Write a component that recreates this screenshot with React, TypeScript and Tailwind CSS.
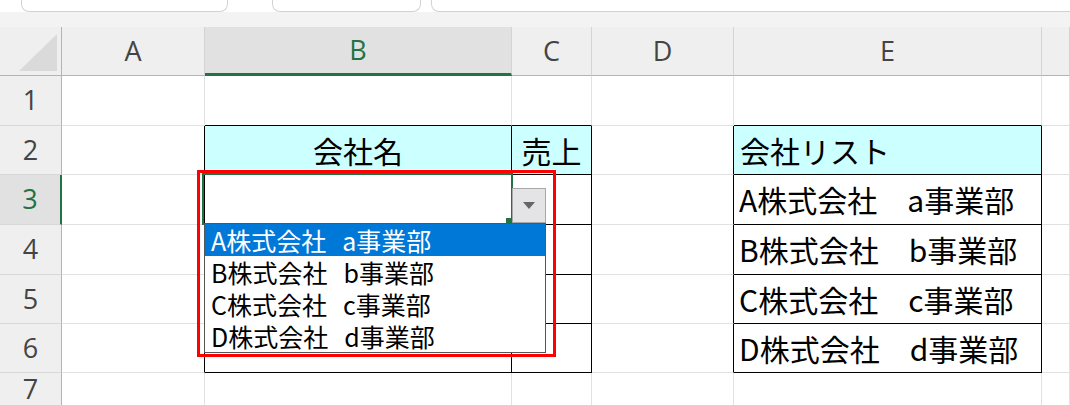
import React from 'react';

const companies = [
  ['A', 'a'],
  ['B', 'b'],
  ['C', 'c'],
  ['D', 'd'],
];

// gridline variants (right / bottom)
const G = 'border-r border-b border-[#e1e1e1]';
const RB = 'border-r border-b border-r-black border-b-[#e1e1e1]';
const BB = 'border-r border-b border-r-[#e1e1e1] border-b-black';
const K = 'border-r border-b border-black';

const colHead =
  "flex items-center justify-center bg-[#efefef] border-r border-b border-r-[#d4d4d4] border-b-[#b4b4b4] text-[#444] text-[27px] font-['Open_Sans',sans-serif]";
const colHeadSel =
  "flex items-center justify-center bg-[#e1e1e1] border-r border-b-[3px] border-r-[#d4d4d4] border-b-[#217346] text-[#217346] text-[27px] font-['Open_Sans',sans-serif]";
const rowHead =
  "flex items-center justify-center bg-[#efefef] border-r border-b border-r-[#b4b4b4] border-b-[#d8d8d8] text-[#444] text-[27px] font-['Open_Sans',sans-serif]";
const rowHeadSel =
  "flex items-center justify-center bg-[#e1e1e1] border-r-2 border-b border-r-[#217346] border-b-[#d8d8d8] text-[#217346] text-[27px] font-['Open_Sans',sans-serif]";

export default function App() {
  return (
    <div className="relative w-[1070px] h-[405px] overflow-hidden bg-white text-black font-['Noto_Sans_CJK_JP',sans-serif]">
      {/* name box / formula bar edges */}
      <div className="flex h-[12px] bg-white">
        <div className="ml-[21px] w-[207px] rounded-b-[8px] border border-t-0 border-[#d2d2d2]" />
        <div className="ml-[44px] w-[149px] rounded-b-[8px] border border-t-0 border-[#d2d2d2]" />
        <div className="ml-[10px] flex-1 rounded-bl-[8px] border border-t-0 border-r-0 border-[#d2d2d2]" />
      </div>
      <div className="h-[15px] bg-[#f3f3f3]" />

      <div className="grid grid-cols-[62px_143px_307px_80px_142px_308px_1fr] grid-rows-[49px_50px_49px_50px_50px_49px_49px_33px]">
        {/* header row */}
        <div className="flex items-end justify-end p-[4px] bg-[#efefef] border-r border-b border-r-[#b4b4b4] border-b-[#b4b4b4]">
          <svg width="38" height="37" viewBox="0 0 38 37">
            <polygon points="38,0 38,37 0,37" fill="#dadada" />
          </svg>
        </div>
        <div className={colHead}>A</div>
        <div className={colHeadSel}>B</div>
        <div className={colHead}>C</div>
        <div className={colHead}>D</div>
        <div className={colHead}>E</div>
        <div className={colHead} />

        {/* row 1 */}
        <div className={rowHead}>1</div>
        <div className={G} />
        <div className={BB} />
        <div className={BB} />
        <div className={G} />
        <div className={BB} />
        <div className={G} />

        {/* row 2 */}
        <div className={rowHead}>2</div>
        <div className={RB} />
        <div className={`${K} flex items-center justify-center bg-[#ccffff] text-[30px]`}>会社名</div>
        <div className={`${K} flex items-center justify-center bg-[#ccffff] text-[30px]`}>売上</div>
        <div className={RB} />
        <div className={`${K} flex items-center pl-[6px] bg-[#ccffff] text-[30px]`}>会社リスト</div>
        <div className={G} />

        {/* rows 3-6 */}
        {companies.map(([u, l], i) => (
          <React.Fragment key={u}>
            <div className={i === 0 ? rowHeadSel : rowHead}>{i + 3}</div>
            <div className={RB} />
            <div className={K} />
            <div className={K} />
            <div className={RB} />
            <div className={`${K} flex items-center pl-[5px] text-[30px]`}>
              {u}株式会社　{l}事業部
            </div>
            <div className={G} />
          </React.Fragment>
        ))}

        {/* row 7 */}
        <div className={rowHead}>7</div>
        <div className={G} />
        <div className={G} />
        <div className={G} />
        <div className={G} />
        <div className={G} />
        <div className={G} />
      </div>

      {/* active cell B3 */}
      <div className="absolute left-[202px] top-[173px] w-[311px] h-[52px] border-2 border-[#217346]" />
      <div className="absolute left-[506px] top-[218px] w-[7px] h-[6px] bg-[#217346]" />

      {/* validation dropdown button */}
      <div className="absolute left-[512px] top-[188px] w-[34px] h-[35px] flex items-center justify-center bg-[#e4e4e7] border border-[#a8a8a8]">
        <svg width="12" height="7" viewBox="0 0 12 7">
          <polygon points="0,0 12,0 6,7" fill="#666" />
        </svg>
      </div>

      {/* dropdown list */}
      <div className="absolute left-[204px] top-[223px] w-[342px] h-[130px] border border-[#555] bg-white">
        {companies.map(([u, l], i) => (
          <div
            key={u}
            className={
              i === 0
                ? 'h-[32px] pl-[6px] bg-[#0078d7] text-white text-[25px] leading-[32px] whitespace-nowrap'
                : 'h-[32px] pl-[6px] text-black text-[25px] leading-[32px] whitespace-nowrap'
            }
          >
            {u}株式会社<span className="text-[16px] leading-[32px]">　</span>{l}事業部
          </div>
        ))}
      </div>

      {/* red highlight frame */}
      <div className="absolute left-[197px] top-[170px] w-[359px] h-[187px] border-[3px] border-[#ff0000]" />
    </div>
  );
}
